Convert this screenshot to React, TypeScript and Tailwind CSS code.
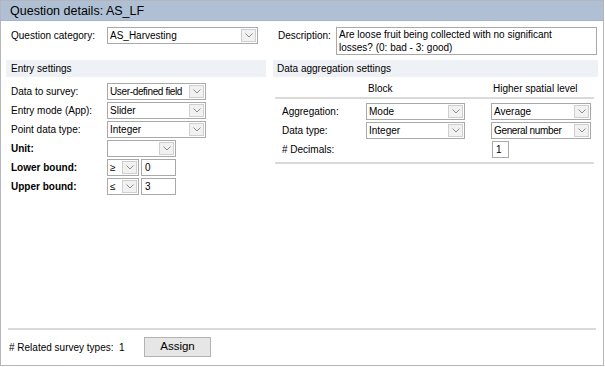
import React from 'react';

function Chevron() {
  return (
    <svg width="8" height="5" viewBox="0 0 8 5" className="block">
      <polyline points="0.5,0.5 4,4 7.5,0.5" fill="none" stroke="#8a8a8a" strokeWidth="1" />
    </svg>
  );
}

function Select({ value, w, tight }: { value: string; w: string; tight?: boolean }) {
  return (
    <div className={`flex h-[17px] border border-[#a9a9a9] bg-white ${w}`}>
      <div className={`flex-1 pl-[2px] leading-[15px] whitespace-nowrap overflow-hidden ${tight ? 'tracking-[-0.35px]' : ''}`}>{value}</div>
      <div className="w-[15px] shrink-0 m-[1px] ml-0 border border-[#cfcfcf] bg-[#f1f1f1] flex items-center justify-center">
        <Chevron />
      </div>
    </div>
  );
}

function Input({ value, w }: { value: string; w: string }) {
  return (
    <div className={`h-[17px] border border-[#a9a9a9] bg-white pl-[3px] leading-[15px] ${w}`}>{value}</div>
  );
}

function Row({ label, bold, children }: { label: string; bold?: boolean; children: React.ReactNode }) {
  return (
    <div className="flex items-center h-[19px]">
      <div className={`w-[101px] pl-[5px] ${bold ? 'font-bold' : ''}`}>{label}</div>
      {children}
    </div>
  );
}

function AggRow({ label, children }: { label: string; children: React.ReactNode }) {
  return (
    <div className="flex items-center h-[19px]">
      <div className="w-[93px] pl-[9px]">{label}</div>
      {children}
    </div>
  );
}

export default function App() {
  return (
    <div className="w-[604px] h-[366px] border border-[#b5b5c0] bg-white flex flex-col text-[10px] text-black font-['Liberation_Sans',Arial,sans-serif]">
      {/* Header */}
      <div className="h-[20px] bg-[#afc0d5] border-b border-[#a3b3c8] pl-[9px] text-[12.5px] leading-[20px]">
        Question details: AS_LF
      </div>

      <div className="flex-1 flex flex-col px-[5px] pt-[6px]">
        {/* Category + description */}
        <div className="flex">
          <div className="w-[260px] flex items-start">
            <div className="w-[101px] pl-[5px] leading-[17px]">Question category:</div>
            <Select value="AS_Harvesting" w="w-[151px]" />
          </div>
          <div className="ml-[7px] flex items-start">
            <div className="w-[63px] pl-[5px] leading-[17px]">Description:</div>
            <div className="w-[261px] h-[28px] border border-[#a9a9a9] pl-[2px] pr-[40px] leading-[13px]">
              Are loose fruit being collected with no significant losses? (0: bad - 3: good)
            </div>
          </div>
        </div>

        {/* Section bars */}
        <div className="flex mt-[5px]">
          <div className="w-[260px] h-[17px] bg-[#eef1f5] pl-[5px] leading-[17px]">Entry settings</div>
          <div className="w-[325px] ml-[7px] h-[17px] bg-[#eef1f5] pl-[4px] leading-[17px]">Data aggregation settings</div>
        </div>

        <div className="flex">
          {/* Entry settings */}
          <div className="w-[260px] pt-[5px]">
            <Row label="Data to survey:">
              <Select value="User-defined field" w="w-[99px]" tight />
            </Row>
            <Row label="Entry mode (App):">
              <Select value="Slider" w="w-[99px]" />
            </Row>
            <Row label="Point data type:">
              <Select value="Integer" w="w-[99px]" />
            </Row>
            <Row label="Unit:" bold>
              <Select value="" w="w-[69px]" />
            </Row>
            <Row label="Lower bound:" bold>
              <Select value="≥" w="w-[32px]" />
              <Input value="0" w="w-[35px] ml-[2px]" />
            </Row>
            <Row label="Upper bound:" bold>
              <Select value="≤" w="w-[32px]" />
              <Input value="3" w="w-[35px] ml-[2px]" />
            </Row>
          </div>

          {/* Data aggregation settings */}
          <div className="w-[325px] ml-[7px]">
            <div className="flex h-[19px] items-end">
              <div className="w-[95px]" />
              <div className="w-[125px]">Block</div>
              <div>Higher spatial level</div>
            </div>
            <div className="h-[2px] bg-[#dadada] ml-[2px] w-[319px] mt-[1px]" />
            <div className="pt-[3px]">
              <AggRow label="Aggregation:">
                <Select value="Mode" w="w-[99px]" />
                <Select value="Average" w="w-[100px] ml-[26px]" />
              </AggRow>
              <AggRow label="Data type:">
                <Select value="Integer" w="w-[99px]" />
                <Select value="General number" w="w-[100px] ml-[26px]" tight />
              </AggRow>
              <AggRow label="# Decimals:">
                <div className="w-[99px]" />
                <Input value="1" w="w-[17px] ml-[27px]" />
              </AggRow>
            </div>
            <div className="h-[2px] bg-[#dadada] ml-[2px] w-[319px] mt-[3px]" />
          </div>
        </div>

        <div className="flex-1" />

        {/* Footer */}
        <div className="h-[2px] bg-[#dadada] ml-[2px] w-[588px]" />
        <div className="flex items-center pt-[7px] pb-[8px]">
          <div className="w-[138px] pl-[3px]"># Related survey types:&nbsp; 1</div>
          <button className="w-[67px] h-[20px] bg-[#e6e6e6] border border-[#b3b3b3] text-[11.5px] text-black">
            Assign
          </button>
        </div>
      </div>
    </div>
  );
}
